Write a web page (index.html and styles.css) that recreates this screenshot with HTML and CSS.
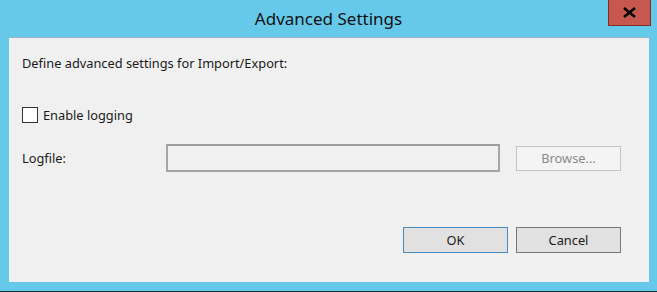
FILE: index.html
```html
<!DOCTYPE html>
<html lang="en">
<head>
  <meta charset="UTF-8">
  <title>Advanced Settings</title>
  <link rel="stylesheet" href="styles.css">
</head>
<body>

  <div class="titlebar">
    <span></span>
    <div class="title">Advanced Settings</div>
    <button class="close-btn">
      <svg width="15" height="11" viewBox="0 0 15 11">
        <path d="M2 1 L13 10 M13 1 L2 10" stroke="#000" stroke-width="2.6" fill="none"/>
      </svg>
    </button>
  </div>

  <div class="client">
    <p class="intro">Define advanced settings for Import/Export:</p>

    <label class="check-row">
      <span class="checkbox"></span>
      <span>Enable logging</span>
    </label>

    <div class="file-row">
      <span class="file-label">Logfile:</span>
      <div class="file-input"></div>
      <button class="btn btn-disabled">Browse...</button>
    </div>

    <div class="actions">
      <button class="btn btn-default">OK</button>
      <button class="btn">Cancel</button>
    </div>
  </div>

  <div class="shelf"></div>
  <div class="taskbar"></div>

</body>
</html>
```

FILE: styles.css
```css
body {
  margin: 0;
  height: 292px;
  background: #66c9ea;
  font-family: 'Noto Sans', sans-serif;
  font-size: 12.8px;
  color: #1a1a1a;
  display: flex;
  flex-direction: column;
  overflow: hidden;
}
.titlebar {
  height: 37px;
  display: grid;
  grid-template-columns: 1fr auto 1fr;
  align-items: start;
}
.title {
  font-size: 17px;
  color: #111;
  padding-top: 7px;
  line-height: 24px;
}
.close-btn {
  justify-self: end;
  margin-right: 6px;
  width: 43px;
  height: 26px;
  background: #c75850;
  border: 1px solid #7d2e2b;
  border-top: none;
  padding: 0;
  display: flex;
  justify-content: center;
  align-items: center;
}
.client {
  height: 245px;
  box-sizing: border-box;
  margin: 0 8px 0 9px;
  background: #f0f0f0;
  border-top: 1px solid #9fb6c6;
  padding: 0 28px 0 13px;
  display: flex;
  flex-direction: column;
}
.intro {
  margin: 17px 0 0;
  line-height: 16px;
}
.check-row {
  margin-top: 36px;
  display: flex;
  align-items: center;
  gap: 5px;
  line-height: 16px;
}
.checkbox {
  width: 14px;
  height: 14px;
  background: #fff;
  border: 1px solid #333;
}
.file-row {
  margin-top: 21px;
  display: flex;
  align-items: center;
}
.file-label {
  width: 144px;
}
.file-input {
  width: 330px;
  height: 24px;
  border: 2px solid #a6a6a6;
  border-top-color: #9b9b9b;
  background: #f0f0f0;
}
.btn {
  height: 26px;
  width: 105px;
  font-family: 'Noto Sans', sans-serif;
  font-size: 12.8px;
  color: #1a1a1a;
  background: #e1e1e1;
  border: 1px solid #777;
  padding: 0;
}
.file-row .btn {
  margin-left: auto;
  height: 25px;
}
.btn-disabled {
  background: #f4f4f4;
  border-color: #c4c4c4;
  color: #8a8a8a;
}
.btn-default {
  border-color: #4a8bc4;
}
.actions {
  margin-top: 55px;
  display: flex;
  justify-content: flex-end;
  gap: 8px;
}
.shelf {
  height: 9px;
}
.taskbar {
  height: 1px;
  background: #1c2b33;
}
```
